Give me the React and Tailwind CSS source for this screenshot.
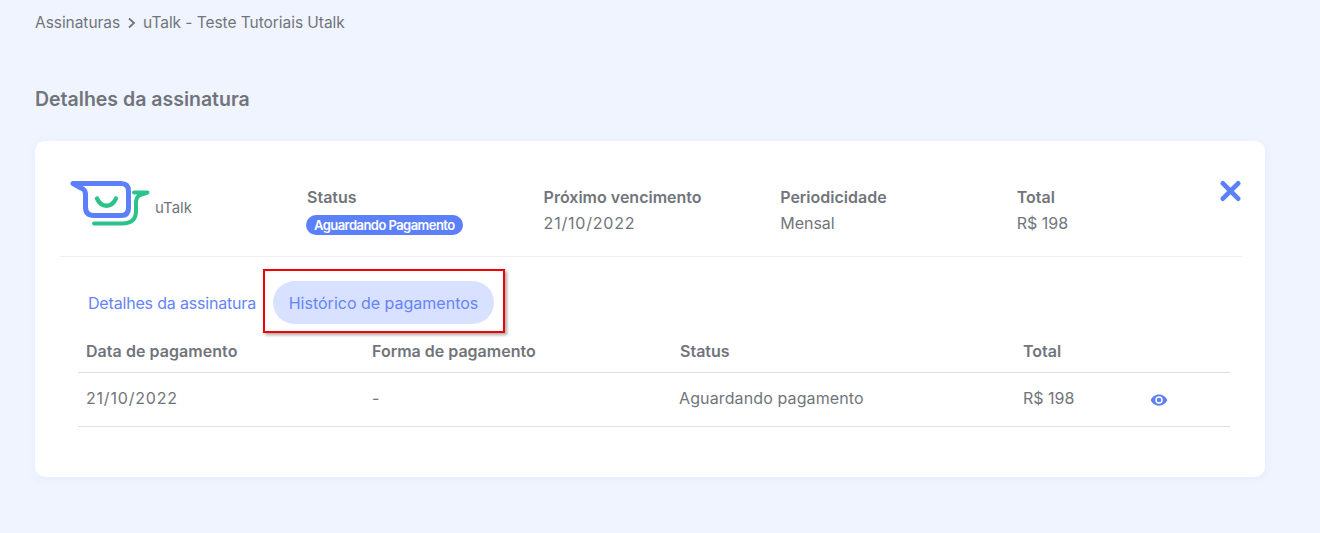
import React from "react";

const Logo = () => (
  <svg width="82" height="48" viewBox="0 0 82 48" fill="none">
    <path d="M3 3.5H51Q58.5 3.5 58.5 11V28Q58.5 35.5 51 35.5H24Q15.5 35.5 15.5 27V14Q15.5 9.5 11 8L3 3.5Z" stroke="#5c7ffa" strokeWidth="5" strokeLinejoin="round" strokeLinecap="round" />
    <path d="M27 18.5C31 28 42 28 46 18.5" stroke="#2cc38a" strokeWidth="4.5" strokeLinecap="round" />
    <path d="M24 43.5H52Q66 43.5 66 31V23Q66 17 70 15L77.5 12.5H64" stroke="#2cc38a" strokeWidth="4" strokeLinecap="round" strokeLinejoin="round" />
  </svg>
);

const Col = ({ label, children, w = "w-[236.6px]" }) => (
  <div className={`${w} shrink-0`}>
    <div className="text-[16px] leading-[20px] font-semibold text-[#71757b]">{label}</div>
    {children}
  </div>
);

const Row = ({ a, b, c, d, head, icon }) => (
  <div className={`flex items-center ${head ? "h-[49px] pt-[6px] font-semibold" : "h-[54px] pb-[3px]"} border-b border-[#dcdfe4] pl-2 text-[16px] text-[#71757b]`}>
    <div className="w-[286px] shrink-0">{a}</div>
    <div className="w-[308px] shrink-0">{b}</div>
    <div className="w-[343px] shrink-0">{c}</div>
    <div className="w-[127px] shrink-0">{d}</div>
    {icon && (
      <svg width="18" height="18" viewBox="0 0 24 24" fill="#5c7ffa" className="mt-[3px]">
        <path d="M12 4.5C7 4.5 2.7 7.6 1 12c1.7 4.4 6 7.5 11 7.5s9.3-3.1 11-7.5c-1.7-4.4-6-7.5-11-7.5zM12 17a5 5 0 1 1 0-10 5 5 0 0 1 0 10zm0-8a3 3 0 1 0 0 6 3 3 0 0 0 0-6z" />
      </svg>
    )}
  </div>
);

export default function App() {
  return (
    <div className="relative h-[533px] w-[1320px] overflow-hidden bg-[#f0f4ff] pl-[35px] font-['Inter',sans-serif] text-[#71757b]">
      <div className="flex h-[45px] items-center gap-[7px] text-[15.5px] tracking-[-0.05px]">
        <span>Assinaturas</span>
        <svg width="9" height="12" viewBox="0 0 9 12" fill="none" stroke="#71757b" strokeWidth="1.8">
          <path d="M2 1.5L7 6L2 10.5" />
        </svg>
        <span>uTalk - Teste Tutoriais Utalk</span>
      </div>
      <h1 className="mt-[41px] text-[19.5px] leading-[26px] font-semibold">Detalhes da assinatura</h1>
      <div className="mt-[29px] h-[336px] w-[1230px] rounded-[10px] bg-white pl-[25px] pr-[23px] shadow-[0_2px_10px_rgba(90,110,170,0.06)]">
        <div className="flex h-[116px] border-b border-[#eceef1] pt-[46px]">
          <div className="-mt-[5px] flex w-[247px] shrink-0 items-start">
            <div className="-mt-[2px] ml-[10px]"><Logo /></div>
            <span className="ml-[3px] mt-[16px] text-[15px] leading-[20px]">uTalk</span>
          </div>
          <Col label="Status">
            <span className="-ml-px mt-[8px] inline-block h-[20px] rounded-full bg-[#5c7ffa] px-[8px] text-[13px] leading-[20px] font-semibold tracking-[-0.55px] text-white">Aguardando Pagamento</span>
          </Col>
          <Col label="Próximo vencimento">
            <div className="mt-[6px] text-[16px] leading-[20px] tracking-[0.8px]">21/10/2022</div>
          </Col>
          <Col label="Periodicidade">
            <div className="mt-[6px] text-[16px] leading-[20px]">Mensal</div>
          </Col>
          <Col label="Total" w="w-[202.2px]">
            <div className="mt-[6px] text-[16px] leading-[20px]">R$ 198</div>
          </Col>
          <svg width="24" height="24" viewBox="0 0 24 24" className="-mt-[8px]" stroke="#5c7ffa" strokeWidth="5" strokeLinecap="round">
            <path d="M4 4L20 20M20 4L4 20" />
          </svg>
        </div>
        <div className="mt-[24px] flex h-[43px] items-center pl-[28px] text-[16px] text-[#6684f8]">
          <span className="w-[185px] shrink-0 tracking-[-0.18px]">Detalhes da assinatura</span>
          <span className="flex h-[43px] w-[221px] items-center justify-center rounded-full bg-[#d8e1ff]">Histórico de pagamentos</span>
        </div>
        <div className="ml-[18px] w-[1152px]">
          <Row head a={<span className="tracking-[0.05px]">Data de pagamento</span>} b="Forma de pagamento" c="Status" d="Total" />
          <Row a={<span className="tracking-[0.8px]">21/10/2022</span>} b="-" c={<span className="-ml-px tracking-[0.12px]">Aguardando pagamento</span>} d="R$ 198" icon />
        </div>
      </div>
      <div className="absolute left-[263px] top-[269px] h-[64px] w-[242px] border-2 border-[#f00000] shadow-[2px_2px_3px_rgba(0,0,0,0.35)]" />
    </div>
  );
}
